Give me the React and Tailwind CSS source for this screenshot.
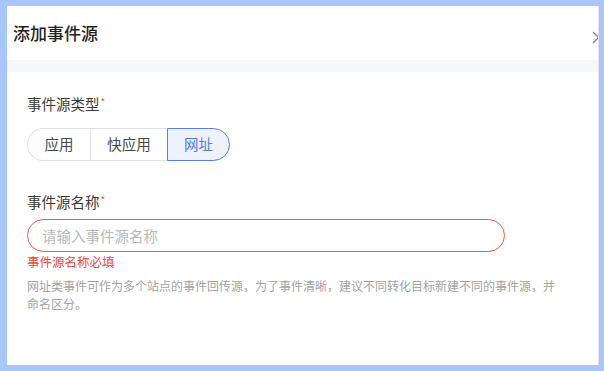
import React, { useState } from 'react'

const font = { fontFamily: '"Noto Sans CJK SC", "Noto Sans", sans-serif' }

const types = ['应用', '快应用', '网址']

const Label = ({ children }) => (
  <div className="flex items-start text-[14.5px] leading-none text-[#3a3a3a]">
    {children}
    <span className="ml-[1px] text-[10px] leading-none text-[#f04b3f]">*</span>
  </div>
)

export default function App() {
  const [type, setType] = useState('网址')

  return (
    <div className="h-[371px] w-[604px] bg-[#a9c6fb] pl-[7px] pt-[6px]" style={font}>
      <div className="relative h-[359px] w-[592px] overflow-hidden border-r border-[#e2e4ea] bg-white">
        {/* header */}
        <div className="flex h-[54px] items-center pl-[6px]">
          <h1 className="text-[17px] font-medium text-[#1f1f1f]">添加事件源</h1>
        </div>
        <button className="absolute right-[-7px] top-[25px] text-[#888]">
          <svg width="13" height="13" viewBox="0 0 13 13" fill="none" stroke="currentColor" strokeWidth="1.3">
            <path d="M1 1l11 11M12 1L1 12" />
          </svg>
        </button>
        <div className="h-[12px] bg-[#f5f7fb]" />

        {/* body */}
        <div className="pl-[20px] pt-[25px]">
          <Label>事件源类型</Label>
          <div className="mt-[16px] flex h-[33px] w-fit">
            {types.map((t, i) => {
              const active = t === type
              return (
                <button
                  key={t}
                  onClick={() => setType(t)}
                  className={
                    'flex h-full items-center justify-center border text-[14.5px] ' +
                    (i === 0 ? 'w-[63px] rounded-l-full border-r-0 ' : '') +
                    (i === 1 ? 'w-[77px] border-r-0 ' : '') +
                    (i === 2 ? 'w-[63px] rounded-r-full ' : '') +
                    (active
                      ? 'border-[#5d7cf4] bg-[#eef1fe] text-[#5b78f0]'
                      : 'border-[#dfe1e7] bg-white text-[#4a4a4a]')
                  }
                >
                  {t}
                </button>
              )
            })}
          </div>

          <div className="mt-[34px]">
            <Label>事件源名称</Label>
          </div>
          <div className="mt-[10px] flex h-[33px] w-[478px] items-center rounded-full border border-[#ec5a50] px-[14px]">
            <input
              className="w-full bg-transparent text-[14.5px] text-[#333] outline-none placeholder:text-[#b8b8b8]"
              placeholder="请输入事件源名称"
            />
          </div>
          <div className="mt-[1px] text-[12.5px] leading-[18px] text-[#f0473c]">事件源名称必填</div>
          <p className="mt-[6px] w-[533px] text-[12px] leading-[18px] text-[#a3a3a3]">
            网址类事件可作为多个站点的事件回传源，为了事件清晰，建议不同转化目标新建不同的事件源，并命名区分。
          </p>
        </div>
      </div>
    </div>
  )
}
